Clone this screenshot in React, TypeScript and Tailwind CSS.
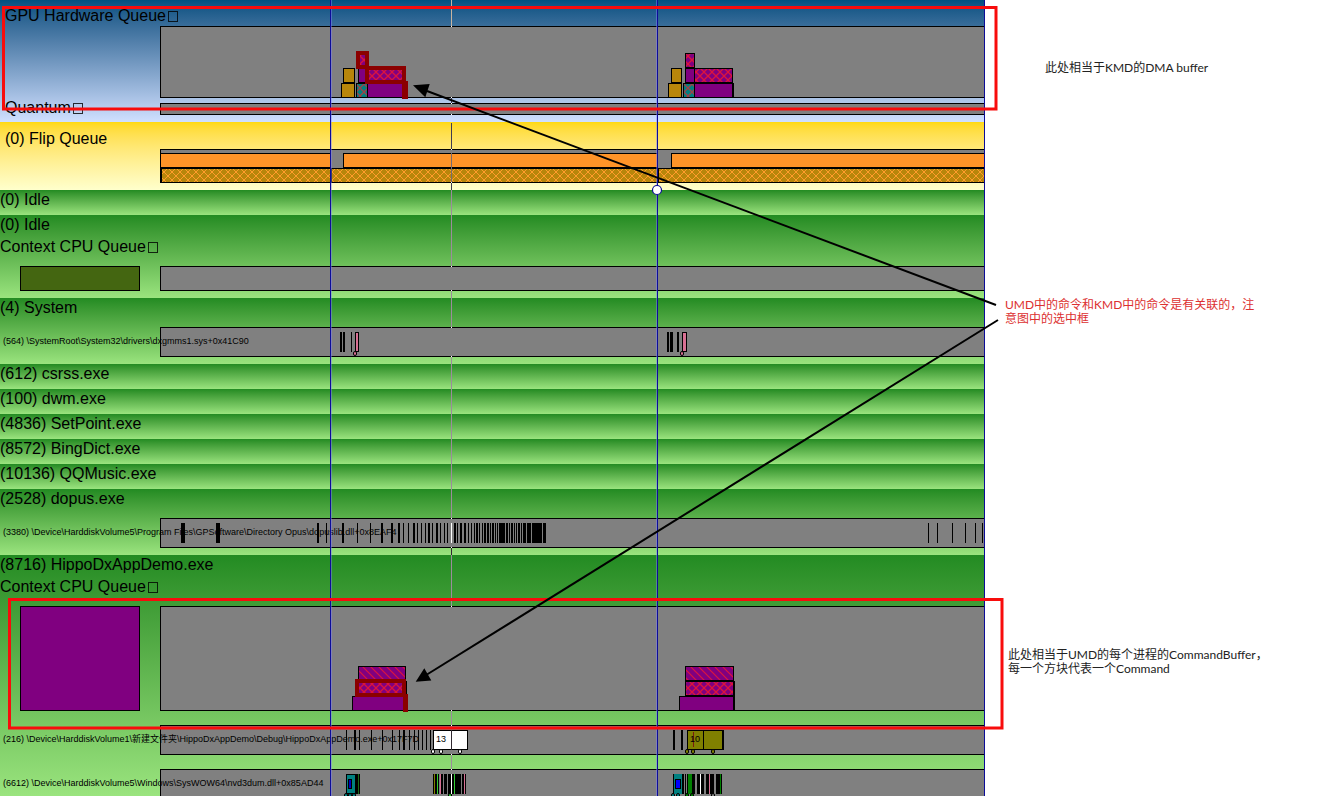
import type { ReactNode } from "react";

type Bar = [x0: number, y0: number, x1: number, y1: number, fill: string];

const GOLD = "#b8860b";
const PURPLE = "#800080";
const SELECT = "#8b0000";
const ORANGE = "#ff9428";

function Block({ bar: [x0, y0, x1, y1, fill], heavy }: { bar: Bar; heavy?: boolean }) {
  return (
    <g>
      <rect x={x0 + 0.5} y={y0 + 0.5} width={x1 - x0 - 1} height={y1 - y0 - 1} fill={fill} stroke="#000" />
      {heavy && <rect x={x1 - 2} y={y0} width={2} height={y1 - y0} />}
    </g>
  );
}

function Ticks({ y, marks, fill = "#000" }: { y: number; marks: number[][]; fill?: string }) {
  return (
    <g fill={fill}>
      {marks.map(([x, w]) => (
        <rect key={x} x={x} y={y} width={w} height={20} />
      ))}
    </g>
  );
}

function Dots({ xs, y, fill }: { xs: number[]; y: number; fill: string }) {
  return (
    <g fill={fill} stroke="#000" shapeRendering="auto">
      {xs.map((x) => (
        <rect key={x} x={x - 1.5} y={y - 1.5} width={3} height={4} rx={1.5} />
      ))}
    </g>
  );
}

function Patterns() {
  return (
    <svg className="absolute size-0" aria-hidden="true">
      <defs>
        <pattern id="goldCross" width="8" height="8" patternUnits="userSpaceOnUse">
          <rect width="8" height="8" fill={GOLD} />
          <path d="M-1 -1L9 9M9 -1L-1 9" stroke="#ff9c2c" strokeWidth="1" />
        </pattern>
        <pattern id="purpleCross" width="8" height="8" patternUnits="userSpaceOnUse">
          <rect width="8" height="8" fill={PURPLE} />
          <path d="M-1 -1L9 9M9 -1L-1 9" stroke="#dc143c" strokeWidth="1.3" />
        </pattern>
        <pattern id="tealCross" width="8" height="8" patternUnits="userSpaceOnUse">
          <rect width="8" height="8" fill="#008080" />
          <path d="M-1 -1L9 9M9 -1L-1 9" stroke="#a04048" strokeWidth="1.3" />
        </pattern>
        <pattern id="purpleDiagonal" width="8" height="8" patternUnits="userSpaceOnUse">
          <rect width="8" height="8" fill={PURPLE} />
          <path d="M-1 -1L9 9M-1 7L1 9M7 -1L9 1" stroke="#dc143c" strokeWidth="1.2" />
        </pattern>
      </defs>
    </svg>
  );
}

/* Chart shapes use timeline coordinates: x runs from 161 to 985 in every track. */
function Track({ top, size, children }: { top: number; size: string; children?: ReactNode }) {
  const heights: Record<string, [string, number]> = {
    quantum: ["h-3", 10],
    queue: ["h-[25px]", 23],
    thread: ["h-[30px]", 28],
    cut: ["h-[27px] border-b-0", 26],
    flip: ["h-[34px]", 32],
    gpu: ["h-[72px]", 70],
    commands: ["h-[105px]", 103],
  };
  const [cls, inner] = heights[size];
  return (
    <div className={`min-w-0 flex-1 border border-r-0 border-black bg-[#808080] ${cls}`}>
      {children && (
        <svg
          viewBox={`161 ${top + 1} 824 ${inner}`}
          preserveAspectRatio="none"
          shapeRendering="crispEdges"
          className="block h-full w-full overflow-visible"
          aria-hidden="true"
        >
          {children}
        </svg>
      )}
    </div>
  );
}

function Title({ children, queue }: { children: ReactNode; queue?: boolean }) {
  return (
    <h2 className="flex items-center gap-0.5 text-base/[24px]">
      {children}
      {queue && <span className="h-[11px] w-2.5 border border-black/80" />}
    </h2>
  );
}

function Process({ name }: { name: string }) {
  return (
    <section className="h-[25px] bg-linear-to-b from-[#228b22] to-[#9ae47e]">
      <h2 className="text-base/[20px]">{name}</h2>
    </section>
  );
}

function Thread({ label, children }: { label: string; children: ReactNode }) {
  return (
    <div className="flex">
      <div className="relative z-10 w-40 shrink-0 pl-[3px] text-[9px]/[28px] whitespace-nowrap">{label}</div>
      {children}
    </div>
  );
}

const opusTicks = [
  [181, 4], [216, 4], [317, 2], [326, 1], [342, 2], [357, 1], [370, 1], [381, 2], [391, 2], [398, 2], [403, 1],
  [408, 1], [413, 2], [417, 1], [421, 1], [425, 1], [428, 2], [432, 1], [436, 2], [440, 1], [444, 1], [447, 1],
  [454, 2], [457, 1], [460, 2], [464, 2], [468, 1], [471, 1], [474, 1], [476, 2], [479, 1], [482, 1],
  [484, 2], [487, 2], [490, 1], [492, 2], [495, 1], [497, 1], [499, 6], [506, 2], [509, 1], [511, 2], [514, 1],
  [516, 1], [518, 2], [521, 1], [523, 3], [527, 4], [532, 10], [543, 3], [928, 1], [937, 1], [952, 1], [965, 1],
  [975, 1], [982, 1],
];

const hippoTicks = [
  [346, 1], [354, 2], [359, 1], [371, 1], [382, 1], [392, 1], [399, 1], [403, 2], [409, 1], [414, 1], [418, 1],
  [422, 1], [426, 1], [430, 1], [673, 2], [681, 2],
];

function Timeline() {
  return (
    <main className="min-w-0 overflow-hidden">
      <section className="h-[122px] bg-linear-to-b from-[#005080] to-[#d0e0ff]">
        <div className="h-[26px] pt-1 pl-[5px]">
          <Title queue>GPU Hardware Queue</Title>
        </div>
        <div className="flex pl-40">
          <Track top={26} size="gpu">
            <Block bar={[343, 68, 355, 83, GOLD]} />
            <Block bar={[341, 83, 355, 98, GOLD]} />
            <Block bar={[358, 68, 368, 83, PURPLE]} />
            <Block bar={[356, 83, 368, 98, "url(#tealCross)"]} />
            <Block bar={[367, 83, 406, 98, PURPLE]} />
            <rect x="358" y="53" width="9" height="14" fill="url(#purpleCross)" stroke={SELECT} strokeWidth="4" />
            <rect x="367" y="68" width="37" height="14" fill="url(#purpleCross)" stroke={SELECT} strokeWidth="4" />
            <rect x="402" y="81" width="6" height="18" fill={SELECT} />
            <Block bar={[671, 68, 682, 83, GOLD]} />
            <Block bar={[668, 83, 682, 98, GOLD]} />
            <Block bar={[683, 83, 695, 98, "url(#tealCross)"]} />
            <Block bar={[685, 68, 695, 83, PURPLE]} />
            <Block bar={[685, 53, 695, 68, "url(#purpleCross)"]} />
            <Block bar={[694, 68, 733, 83, "url(#purpleCross)"]} />
            <Block bar={[694, 83, 734, 98, PURPLE]} heavy />
          </Track>
        </div>
        <div className="flex pt-[5px]">
          <div className="-mt-[7px] w-40 pl-[5px]">
            <Title queue>Quantum</Title>
          </div>
          <Track top={103} size="quantum" />
        </div>
      </section>

      <section className="h-[68px] bg-linear-to-b from-[#ffd90c] to-[#ffffcc]">
        <div className="h-[27px] pt-[5px] pl-[5px]">
          <Title>(0) Flip Queue</Title>
        </div>
        <div className="flex pl-40">
          <Track top={149} size="flip">
            <Block bar={[160, 153, 331, 168, ORANGE]} />
            <Block bar={[343, 153, 658, 168, ORANGE]} />
            <Block bar={[671, 153, 986, 168, ORANGE]} />
            <rect x="161" y="168" width="824" height="14" fill="url(#goldCross)" />
            <path d="M160 168.5H985" stroke="#000" />
            <path d="M161.5 168V183M331.5 168V183M658.5 168V183" stroke="#000" />
          </Track>
        </div>
      </section>

      <Process name="(0) Idle" />

      <section className="h-[83px] bg-linear-to-b from-[#228b22] to-[#9ae47e]">
        <h2 className="text-base/[20px]">(0) Idle</h2>
        <div className="h-[31px]">
          <Title queue>Context CPU Queue</Title>
        </div>
        <div className="flex">
          <div className="w-40 px-5">
            <div className="h-[25px] border border-black bg-[#446611]" />
          </div>
          <Track top={266} size="queue" />
        </div>
      </section>

      <section className="h-[66px] bg-linear-to-b from-[#228b22] to-[#9ae47e]">
        <h2 className="h-[29px] text-base/[20px]">(4) System</h2>
        <Thread label="(564) \SystemRoot\System32\drivers\dxgmms1.sys+0x41C90">
          <Track top={327} size="thread">
            <Ticks y={332} marks={[[340, 2], [343, 2], [351, 1], [667, 2], [670, 3], [677, 2]]} />
            <Block bar={[355, 332, 359, 352, "#d87093"]} />
            <Block bar={[682, 332, 687, 352, "#d87093"]} />
            <Dots xs={[355, 682]} y={353} fill="#d87093" />
          </Track>
        </Thread>
      </section>

      <Process name="(612) csrss.exe" />
      <Process name="(100) dwm.exe" />
      <Process name="(4836) SetPoint.exe" />
      <Process name="(8572) BingDict.exe" />
      <Process name="(10136) QQMusic.exe" />

      <section className="h-[66px] bg-linear-to-b from-[#228b22] to-[#9ae47e]">
        <h2 className="h-[29px] text-base/[20px]">(2528) dopus.exe</h2>
        <Thread label="(3380) \Device\HarddiskVolume5\Program Files\GPSoftware\Directory Opus\dopuslib.dll+0x8EAF4">
          <Track top={518} size="thread">
            <Ticks y={523} marks={opusTicks} />
          </Track>
        </Thread>
      </section>

      <section className="h-[241px] bg-linear-to-b from-[#228b22] to-[#9ae47e]">
        <h2 className="text-base/[20px]">(8716) HippoDxAppDemo.exe</h2>
        <div className="h-[31px]">
          <Title queue>Context CPU Queue</Title>
        </div>
        <div className="flex pb-[14px]">
          <div className="w-40 px-5">
            <div className="h-[105px] border border-black bg-[#800080]" />
          </div>
          <Track top={606} size="commands">
            <Block bar={[358, 666, 406, 681, "url(#purpleDiagonal)"]} />
            <Block bar={[352, 696, 406, 711, PURPLE]} />
            <Block bar={[358, 681, 407, 696, PURPLE]} heavy />
            <rect x="357" y="681" width="47" height="14" fill="url(#purpleCross)" stroke={SELECT} strokeWidth="4" />
            <rect x="403" y="694" width="5" height="18" fill={SELECT} />
            <Block bar={[685, 666, 734, 681, "url(#purpleDiagonal)"]} />
            <Block bar={[685, 681, 735, 696, "url(#purpleCross)"]} heavy />
            <Block bar={[679, 696, 735, 711, PURPLE]} heavy />
          </Track>
        </div>
        <div className="pb-[14px]">
          <Thread label="(216) \Device\HarddiskVolume1\新建文件夹\HippoDxAppDemo\Debug\HippoDxAppDemo.exe+0x17F7D">
            <Track top={725} size="thread">
              <Ticks y={730} marks={hippoTicks} />
              <Block bar={[433, 730, 468, 750, "#fff"]} />
              <text x="436" y="742" fontSize="9">13</text>
              <Dots xs={[433, 441, 460]} y={751} fill="#fff" />
              <Block bar={[687, 730, 724, 750, "#808000"]} heavy />
              <Ticks y={730} marks={[[703, 1]]} />
              <path d="M693.5 732V747" stroke="#7a1a10" />
              <Dots xs={[687, 693, 713]} y={751} fill="#808000" />
              <text x="690" y="742" fontSize="9">10</text>
            </Track>
          </Thread>
        </div>
        <Thread label="(6612) \Device\HarddiskVolume5\Windows\SysWOW64\nvd3dum.dll+0x85AD44">
          <Track top={769} size="cut">
            <Block bar={[346, 774, 357, 794, "#008080"]} />
            <Block bar={[348, 779, 352, 789, "#0000c0"]} />
            <Ticks y={774} marks={[[355, 1], [357, 3]]} />
            <Ticks y={774} marks={[[358, 1]]} fill="#1c6a1c" />
            <Dots xs={[346, 350, 354]} y={795} fill="#008080" />
            <Ticks y={774} marks={[[433, 33]]} />
            <Ticks y={774} marks={[[439, 1], [443, 1], [447, 1], [461, 1]]} fill="#808080" />
            <Ticks y={774} marks={[[434, 1]]} fill="#808000" />
            <Ticks y={774} marks={[[437, 1], [454, 1]]} fill="#32cd32" />
            <Ticks y={774} marks={[[440, 1], [464, 1]]} fill="#d87093" />
            <Dots xs={[450]} y={795} fill="#32cd32" />
            <Ticks y={774} marks={[[673, 22], [697, 7], [706, 16]]} />
            <Ticks y={774} marks={[[674, 8]]} fill="#008080" />
            <Block bar={[675, 779, 681, 789, "#0000ff"]} />
            <Ticks y={774} marks={[[684, 1], [686, 1], [714, 2]]} fill="#808080" />
            <Ticks y={774} marks={[[688, 4], [720, 1]]} fill="#008000" />
            <Ticks y={774} marks={[[700, 1]]} fill="#fff" />
            <Ticks y={774} marks={[[709, 1]]} fill="#d87093" />
            <Dots xs={[673, 678]} y={795} fill="#008080" />
            <Dots xs={[687, 692]} y={795} fill="#008000" />
            <Dots xs={[713]} y={795} fill="#808080" />
          </Track>
        </Thread>
      </section>
    </main>
  );
}

function Notes() {
  return (
    <aside className="min-w-0 font-['Lato','Noto_Sans_CJK_SC',sans-serif] text-xs/[14px] whitespace-nowrap text-[#222]">
      <p className="pt-[61px] pl-[60px]">此处相当于KMD的DMA buffer</p>
      <p className="pt-[223px] pl-5 text-[#dc3030]">
        UMD中的命令和KMD中的命令是有关联的，注
        <br />
        意图中的选中框
      </p>
      <p className="pt-[322px] pl-[23px]">
        此处相当于UMD的每个进程的CommandBuffer，
        <br />
        每一个方块代表一个Command
      </p>
    </aside>
  );
}

/* The hover cursor stands out against each band and fades inside grey tracks. */
function Cursor() {
  return (
    <g shapeRendering="crispEdges">
      <path d="M451.5 0V26" stroke="#c8b4a0" />
      <path d="M451.5 98V103M451.5 123V149M451.5 183V190" stroke="#403c50" />
      <path d="M451.5 153V182" stroke="#786c70" />
      <path
        d="M451.5 190V266M451.5 291V327M451.5 357V518M451.5 555V606M451.5 711V725M451.5 755V769"
        stroke="#9c8c9c"
      />
      <path d="M451.5 548V555M451.5 730V750" stroke="#302830" />
      <path
        d="M451.5 26V27M451.5 97V98M451.5 103V104M451.5 114V115M451.5 149V150M451.5 182V183M451.5 266V267M451.5 290V291M451.5 327V328M451.5 356V357M451.5 518V519M451.5 523V543M451.5 547V548M451.5 606V607M451.5 710V711M451.5 725V726M451.5 754V755M451.5 769V770M451.5 774V794"
        stroke="#fff"
      />
    </g>
  );
}

function Annotations() {
  return (
    <svg
      viewBox="0 0 1334 796"
      preserveAspectRatio="none"
      className="pointer-events-none absolute inset-0 z-20 h-full w-full"
      aria-hidden="true"
    >
      <Cursor />
      <path d="M330.5 0V796M657.5 0V796M984.5 0V796" stroke="#0c0c98" />
      <path d="M331.5 0V796M656.5 0V796" stroke="#8080ff" strokeOpacity="0.45" />
      <circle cx="657" cy="190" r="4.5" fill="#fff" stroke="#0c0c98" strokeWidth="1.2" />
      <g fill="none" stroke="#f80c0c" strokeWidth="3">
        <rect x="3.5" y="7.5" width="992.5" height="101.5" />
        <rect x="9.5" y="599.5" width="992.5" height="128.5" />
      </g>
      <g stroke="#000" strokeWidth="2">
        <path d="M996 305L427 91" />
        <path d="M998 320L427 674.500" />
      </g>
      <path d="M413 85.300L429.700 84L425.300 97.300ZM415.700 681.700L424.300 668.300L431.300 680.500Z" />
    </svg>
  );
}

export default function App() {
  return (
    <div className="relative grid min-h-screen grid-cols-[985fr_349fr] overflow-hidden bg-white font-['Liberation_Sans','Noto_Sans_CJK_SC',sans-serif] text-black">
      <Patterns />
      <Timeline />
      <Notes />
      <Annotations />
    </div>
  );
}
